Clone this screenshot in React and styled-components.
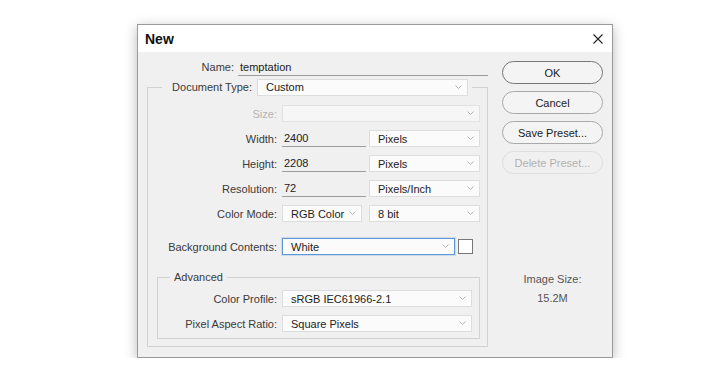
import styled, { createGlobalStyle } from "styled-components";

const GlobalStyle = createGlobalStyle`
  body {
    margin: 0;
    background: #ffffff;
    font-family: "Liberation Sans", Arial, sans-serif;
  }
`;

const Chevron = () => (
  <svg width="7" height="5" viewBox="0 0 7 5">
    <polyline points="0.5,0.5 3.5,3.5 6.5,0.5" fill="none" stroke="#b3b3b3" strokeWidth="1" />
  </svg>
);

const CloseIcon = () => (
  <svg width="10" height="10" viewBox="0 0 10 10">
    <path d="M0.5 0.5 L9.5 9.5 M9.5 0.5 L0.5 9.5" stroke="#222" strokeWidth="1.1" />
  </svg>
);

const Select = ({ value, width, focused, disabled }) => (
  <SelectBox $width={width} $focused={focused} $disabled={disabled}>
    <span>{value}</span>
    <Chevron />
  </SelectBox>
);

const Field = ({ label, labelWidth, disabled, top, children }) => (
  <Row $top={top}>
    <Label $width={labelWidth} $disabled={disabled}>
      {label}
    </Label>
    {children}
  </Row>
);

const App = () => {
  return (
    <Page>
      <GlobalStyle />
      <Dialog>
        <TitleBar>
          <Title>New</Title>
          <CloseIcon />
        </TitleBar>
        <Body>
          <LeftCol>
            <NameRow>
              <Label $width={87}>Name:</Label>
              <TextInput $width={251}>temptation</TextInput>
            </NameRow>

            <Group>
              <Legend $offset={14}>
                <LegendInner>
                  <Label $width={86}>Document Type:</Label>
                  <Select value="Custom" width={211} />
                </LegendInner>
              </Legend>

              <Field label="Size:" labelWidth={129} disabled>
                <Select value="" width={198} disabled />
              </Field>
              <Field label="Width:" labelWidth={129} top={8}>
                <TextInput $width={84}>2400</TextInput>
                <Gap $w={3} />
                <Select value="Pixels" width={111} />
              </Field>
              <Field label="Height:" labelWidth={129} top={8}>
                <TextInput $width={84}>2208</TextInput>
                <Gap $w={3} />
                <Select value="Pixels" width={111} />
              </Field>
              <Field label="Resolution:" labelWidth={129} top={8}>
                <TextInput $width={84}>72</TextInput>
                <Gap $w={3} />
                <Select value="Pixels/Inch" width={111} />
              </Field>
              <Field label="Color Mode:" labelWidth={129} top={8}>
                <Select value="RGB Color" width={80} />
                <Gap $w={7} />
                <Select value="8 bit" width={111} />
              </Field>
              <Field label="Background Contents:" labelWidth={129} top={16}>
                <Select value="White" width={173} focused />
                <Gap $w={3} />
                <Swatch />
              </Field>

              <SubGroup>
                <Legend $offset={12}>
                  <LegendText>Advanced</LegendText>
                </Legend>
                <Field label="Color Profile:" labelWidth={119}>
                  <Select value="sRGB IEC61966-2.1" width={190} />
                </Field>
                <Field label="Pixel Aspect Ratio:" labelWidth={119} top={8}>
                  <Select value="Square Pixels" width={190} />
                </Field>
              </SubGroup>
            </Group>
          </LeftCol>

          <RightCol>
            <Button $primary>OK</Button>
            <Button>Cancel</Button>
            <Button>Save Preset...</Button>
            <Button disabled>Delete Preset...</Button>
            <ImageSize>
              <span>Image Size:</span>
              <span>15.2M</span>
            </ImageSize>
          </RightCol>
        </Body>
      </Dialog>
    </Page>
  );
};

export default App;

const Page = styled.div`
  padding: 24px 0 0 137px;
`;

const Dialog = styled.div`
  width: 476px;
  height: 334px;
  box-sizing: border-box;
  border: 1px solid #9a9a9a;
  background: #f0f0f0;
  box-shadow: 0 3px 12px rgba(0, 0, 0, 0.28);
  display: flex;
  flex-direction: column;
`;

const TitleBar = styled.div`
  height: 27px;
  flex-shrink: 0;
  background: #ffffff;
  display: flex;
  align-items: center;
  justify-content: space-between;
  padding: 0 9px 0 7px;
`;

const Title = styled.div`
  font-size: 14px;
  font-weight: bold;
  color: #111;
  line-height: 16px;
`;

const Body = styled.div`
  display: flex;
  gap: 14px;
  padding: 6px 8px 0 9px;
`;

const LeftCol = styled.div`
  width: 341px;
  display: flex;
  flex-direction: column;
`;

const NameRow = styled.div`
  display: flex;
  align-items: center;
  gap: 4px;
  height: 18px;
`;

const Row = styled.div`
  display: flex;
  align-items: center;
  height: 17px;
  margin-top: ${(p) => p.$top || 0}px;
`;

const Label = styled.div`
  width: ${(p) => p.$width}px;
  flex-shrink: 0;
  text-align: right;
  font-size: 11px;
  color: ${(p) => (p.$disabled ? "#b4b4b4" : "#3a3a3a")};
  padding-right: ${(p) => (p.$width > 100 ? 5 : 0)}px;
  box-sizing: content-box;
  white-space: nowrap;
`;

const TextInput = styled.div`
  width: ${(p) => p.$width}px;
  height: 17px;
  box-sizing: border-box;
  border-bottom: 1px solid #9c9c9c;
  padding-left: 2px;
  font-size: 11px;
  line-height: 16px;
  color: #222;
`;

const Gap = styled.div`
  width: ${(p) => p.$w}px;
  flex-shrink: 0;
`;

const SelectBox = styled.div`
  width: ${(p) => p.$width}px;
  height: 17px;
  box-sizing: border-box;
  flex-shrink: 0;
  display: flex;
  align-items: center;
  justify-content: space-between;
  padding: 0 5px 0 8px;
  font-size: 11px;
  color: #222;
  background: ${(p) => (p.$disabled ? "#f6f6f6" : "#fbfbfb")};
  border: 1px solid ${(p) => (p.$focused ? "#5e98d6" : p.$disabled ? "#e2e2e2" : "#dddddd")};
  box-shadow: ${(p) => (p.$focused ? "0 0 0 1px rgba(94, 152, 214, 0.25)" : "none")};
  white-space: nowrap;
`;

const Swatch = styled.div`
  width: 15px;
  height: 15px;
  box-sizing: border-box;
  border: 1px solid #777;
  background: #ffffff;
`;

const Group = styled.fieldset`
  margin: 2px 0 0 0;
  padding: 9px 0 7px 0;
  min-inline-size: 0;
  border: 1px solid #d2d2d2;
`;

const SubGroup = styled.fieldset`
  margin: 15px 7px 0 9px;
  padding: 6px 0 6px 0;
  min-inline-size: 0;
  border: 1px solid #d2d2d2;
`;

const Legend = styled.legend`
  margin-left: ${(p) => p.$offset}px;
  padding: 0 4px;
`;

const LegendInner = styled.div`
  display: flex;
  align-items: center;
  gap: 5px;
  height: 18px;
`;

const LegendText = styled.div`
  font-size: 11px;
  line-height: 14px;
  color: #3a3a3a;
`;

const RightCol = styled.div`
  width: 101px;
  padding-top: 3px;
  display: flex;
  flex-direction: column;
  gap: 7px;
`;

const Button = styled.button`
  height: 23px;
  border-radius: 12px;
  border: 1px solid ${(p) => (p.$primary ? "#777777" : p.disabled ? "#dedede" : "#a9a9a9")};
  background: ${(p) => (p.disabled ? "#f0f0f0" : "#f4f4f4")};
  font-family: "Liberation Sans", Arial, sans-serif;
  font-size: 11px;
  color: ${(p) => (p.disabled ? "#b0b0b0" : "#222")};
  padding: 0;
`;

const ImageSize = styled.div`
  margin-top: 91px;
  display: flex;
  flex-direction: column;
  align-items: center;
  gap: 5px;
  font-size: 11px;
  line-height: 14px;
  color: #555;
`;
